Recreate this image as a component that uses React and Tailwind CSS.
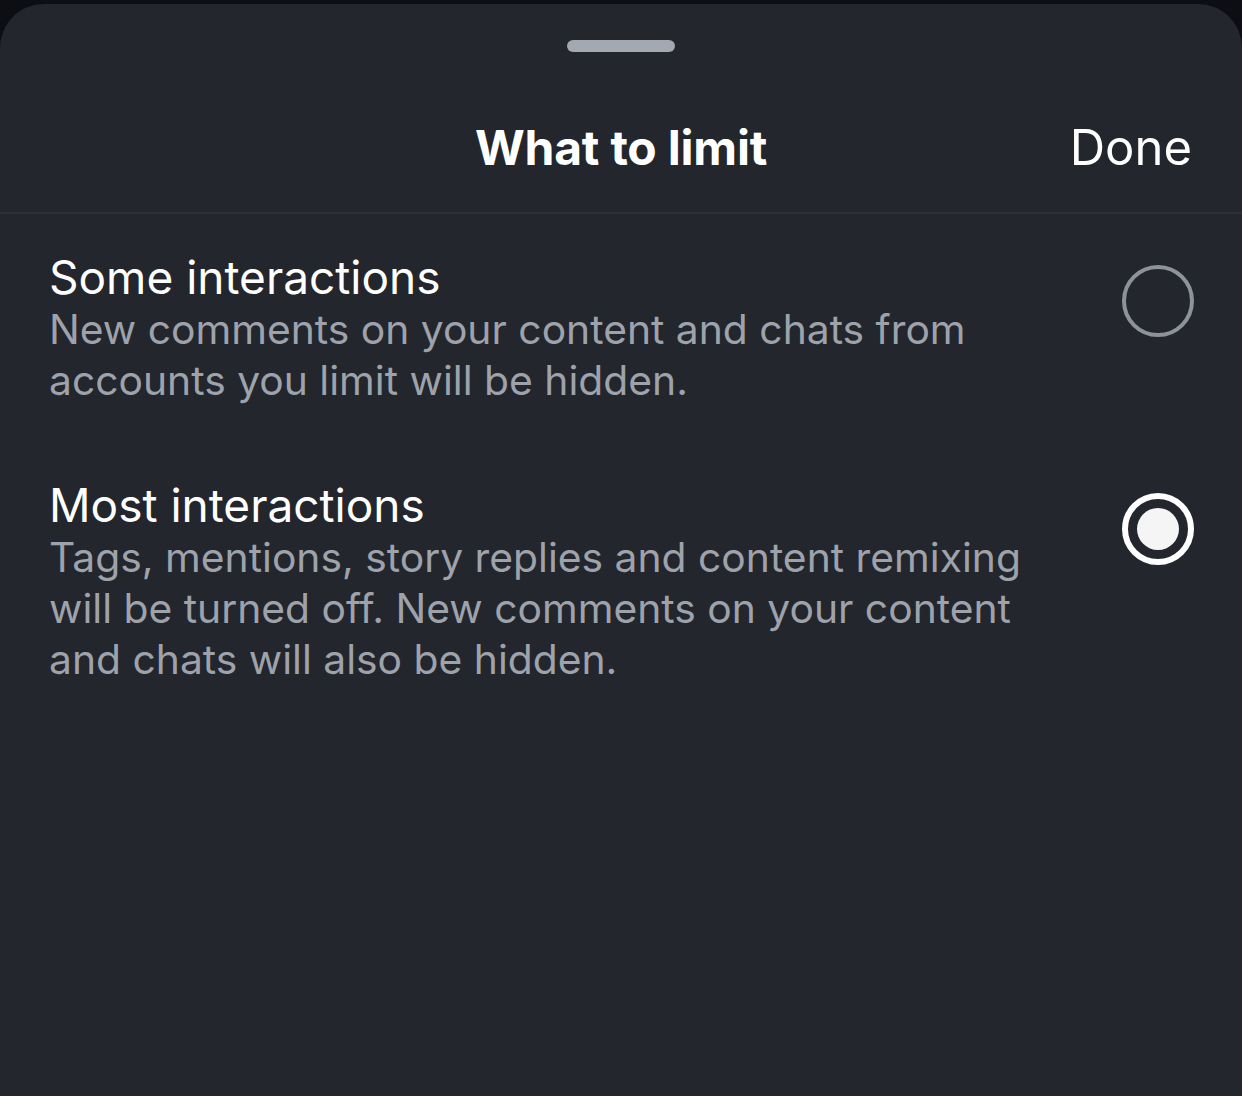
export default function App() {
  return (
    <div className="w-[1242px] h-[1096px] bg-[#0c0e13] pt-[4px] overflow-hidden">
      <div className="h-full bg-[#23262d] rounded-t-[44px] flex flex-col font-['Inter',sans-serif]">
        <div className="flex justify-center pt-[36px]">
          <div className="w-[108px] h-[12px] rounded-full bg-[#a4a8b0]" />
        </div>
        <div className="relative h-[162px] border-b-[2px] border-[#2c2f35] flex justify-center pt-[66px]">
          <div className="text-[48px] leading-[60px] font-bold text-white tracking-[-0.2px]">What to limit</div>
          <div className="absolute right-[50px] top-[66px] text-[49px] leading-[60px] text-white">Done</div>
        </div>
        <div className="flex flex-col pl-[49px] pr-[48px] pt-[36px] gap-[72px]">
          <Option
            title="Some interactions"
            lines={["New comments on your content and chats from", "accounts you limit will be hidden."]}
            selected={false}
          />
          <Option
            title="Most interactions"
            lines={[
              "Tags, mentions, story replies and content remixing",
              "will be turned off. New comments on your content",
              "and chats will also be hidden.",
            ]}
            selected={true}
          />
        </div>
      </div>
    </div>
  );
}

function Option({ title, lines, selected }) {
  return (
    <div className="flex items-start justify-between">
      <div className="flex flex-col">
        <div className="text-[46px] leading-[54px] text-white">{title}</div>
        <div className="text-[40.8px] leading-[51px] text-[#9ea2ab]">
          {lines.map((l, i) => (
            <div key={i}>{l}</div>
          ))}
        </div>
      </div>
      <div className="pt-[15px]">
        {selected ? (
          <div className="w-[72px] h-[72px] rounded-full border-[6px] border-white flex items-center justify-center">
            <div className="w-[42px] h-[42px] rounded-full bg-[#f5f5f5]" />
          </div>
        ) : (
          <div className="w-[72px] h-[72px] rounded-full border-[4px] border-[#8e929b]" />
        )}
      </div>
    </div>
  );
}
